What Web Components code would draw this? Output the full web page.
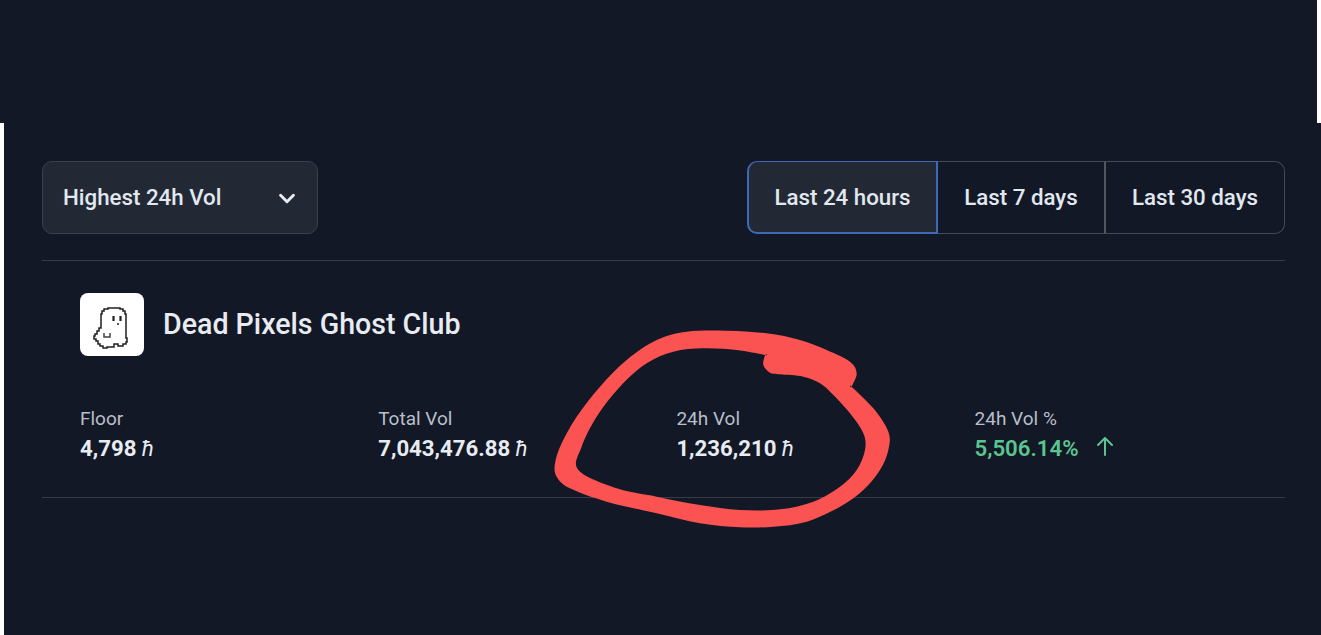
<!DOCTYPE html>
<html>
<head>
<meta charset="utf-8">
<style>
  html, body { margin: 0; padding: 0; height: 100%; background: #fff; overflow: hidden; }
  body { font-family: Roboto, "Liberation Sans", sans-serif; color: #e2e8f0; }
</style>
</head>
<body>
<template id="tpl-page">
  <style>
    :host { display: flex; flex-direction: column; width: 1321px; height: 635px; background: #fff; }
    .top { height: 123px; margin-right: 4px; background: #121826; flex: none; }
    .main { flex: 1; margin-left: 4px; background: #121826; padding: 38px 36px 0 38px; }
  </style>
  <div class="top"></div>
  <div class="main"><slot></slot></div>
</template>

<template id="tpl-select">
  <style>
    :host { display: flex; align-items: center; justify-content: space-between; box-sizing: border-box;
      width: 276px; height: 73px; padding: 0 19px 2px 20px; background: #222935; border: 1px solid #3a414e; border-radius: 10px;
      font-size: 22.3px; font-weight: 500; color: #e2e8f0; }
    svg { width: 22px; height: 22px; display: block; margin-top: 2px; }
  </style>
  <slot></slot>
  <svg viewBox="0 0 24 24" fill="none" stroke="#e8edf3" stroke-width="3.2" stroke-linecap="round" stroke-linejoin="round"><path d="M5 9l7 7 7-7"/></svg>
</template>

<template id="tpl-range">
  <style>
    :host { display: flex; box-sizing: border-box; height: 73px; }
  </style>
  <slot></slot>
</template>

<template id="tpl-range-btn">
  <style>
    :host { display: flex; align-items: center; justify-content: center; box-sizing: border-box; height: 73px; padding-bottom: 2px;
      border: 1px solid #434a57; border-left-width: 0; border-right: 2px solid #51575f; font-size: 22.3px; font-weight: 500; color: #e2e8f0; background: #121826; }
    :host([last]) { border-radius: 0 10px 10px 0; border-right: 1px solid #434a57; }
    :host([active]) { background: #222935; border: 2px solid #3f68b5; border-top-width: 1px; border-radius: 10px 0 0 10px; padding-bottom: 1px; }
  </style>
  <slot></slot>
</template>

<template id="tpl-collection">
  <style>
    :host { display: flex; align-items: center; gap: 19px; font-size: 28.6px; font-weight: 500; color: #e8ecf1; }
    .logo { width: 64px; height: 63px; background: #fff; border-radius: 8px; display: flex; align-items: center; justify-content: center; flex: none; }
    .name { margin-bottom: 1px; }
  </style>
  <div class="logo">
    <svg width="54" height="54" viewBox="0 0 54 54" fill="none" stroke="#1f1f1f" stroke-width="1.5">
      <path fill="#fff" d="M23 10H35V11H38V13H40V16H41V40H42V44H41V46H38V48H33V46H29V49H22V50H18V48H15V46H13V43H11V41H9V38H10V36H12V33H14V30H16V16H17V13H19V11H23Z"/>
      <path d="M19 35V39H25V35" stroke="#444"/>
      <path d="M28.5 18V23M35.5 18V23" stroke-width="2.2" stroke="#222"/>
      <path d="M32 26H34" stroke="#222"/>
    </svg>
  </div>
  <span class="name"><slot></slot></span>
</template>

<template id="tpl-stats">
  <style>
    :host { display: grid; grid-template-columns: repeat(4, 298.2px); box-sizing: border-box; }
  </style>
  <slot></slot>
</template>

<template id="tpl-stat">
  <style>
    :host { display: block; }
    .label { font-size: 19px; line-height: 24px; color: #b9bfc9; }
    .value { font-size: 22.2px; line-height: 34px; font-weight: 700; color: #e8ecf1; display: flex; align-items: center; }
    :host([up]) .value { color: #5cc48f; font-weight: 600; }
    svg { margin-left: 15px; margin-top: -4px; width: 22px; height: 22px; }
  </style>
  <div class="label"></div>
  <div class="value"><slot></slot><svg viewBox="0 0 22 22" fill="none" stroke="#5cc48f" stroke-width="2" stroke-linecap="round" stroke-linejoin="round"><path d="M11 20V3M4 10l7-7 7 7"/></svg></div>
</template>

<template id="tpl-scribble">
  <style>
    :host { position: absolute; left: 540px; top: 320px; width: 360px; height: 215px; pointer-events: none; display: block; }
    svg { display: block; }
  </style>
  <svg width="360" height="215" viewBox="0 0 1080 645"><path fill="#fb5252" fill-rule="evenodd"/></svg>
</template>

<app-page>
  <div style="display:flex;justify-content:space-between;align-items:flex-start">
    <sort-select>Highest 24h Vol</sort-select>
    <range-tabs>
      <range-button active style="width:191px">Last 24 hours</range-button>
      <range-button style="width:168px">Last 7 days</range-button>
      <range-button last style="width:179px">Last 30 days</range-button>
    </range-tabs>
  </div>
  <div style="height:1px;background:#353c49;margin-top:26px"></div>
  <div style="padding:32px 0 0 38px">
    <collection-title>Dead Pixels Ghost Club</collection-title>
    <stat-grid style="margin-top:51px">
      <stat-item label="Floor">4,798 <i style="font-weight:400;margin-left:5px">ħ</i></stat-item>
      <stat-item label="Total Vol">7,043,476.88 <i style="font-weight:400;margin-left:5px">ħ</i></stat-item>
      <stat-item label="24h Vol">1,236,210 <i style="font-weight:400;margin-left:5px">ħ</i></stat-item>
      <stat-item label="24h Vol %" up>5,506.14%</stat-item>
    </stat-grid>
  </div>
  <div style="height:1px;background:#353c49;margin-top:32px"></div>
</app-page>
<hand-scribble></hand-scribble>

<script>
  class TemplateElement extends HTMLElement {
    constructor(id) {
      super();
      this.attachShadow({mode: 'open'});
      this.shadowRoot.appendChild(document.getElementById(id).content.cloneNode(true));
    }
  }

  class StatItem extends TemplateElement {
    constructor() { super('tpl-stat'); }
    connectedCallback() {
      this.shadowRoot.querySelector('.label').textContent = this.getAttribute('label');
      // only the percentage column has the arrow
      this.shadowRoot.querySelector('svg').style.display = this.hasAttribute('up') ? 'block' : 'none';
    }
  }

  // closed catmull-rom curve through a list of points, repeat a point for a corner
  function smoothLoop(pts) {
    const n = pts.length;
    let d = 'M' + pts[0].join(' ');
    for (let i = 0; i < n; i++) {
      const [p0, p1, p2, p3] = [pts[(i + n - 1) % n], pts[i], pts[(i + 1) % n], pts[(i + 2) % n]];
      d += 'C' + (p1[0] + (p2[0] - p0[0]) / 6) + ' ' + (p1[1] + (p2[1] - p0[1]) / 6) + ' '
        + (p2[0] - (p3[0] - p1[0]) / 6) + ' ' + (p2[1] - (p3[1] - p1[1]) / 6) + ' ' + p2.join(' ');
    }
    return d + 'Z';
  }

  class HandScribble extends TemplateElement {
    constructor() {
      super('tpl-scribble');
      const outer = [[440,35],[560,32],[680,40],[780,60],[860,90],[930,125],[950,160],[935,200],[935,200],[1000,265],[1045,335],[1045,390],[1020,450],[970,510],[900,560],[800,605],[700,620],[600,622],[480,610],[350,580],[200,545],[90,505],[50,470],[45,430],[65,370],[110,290],[180,200],[260,120],[350,60]];
      const inner = [[115,450],[125,380],[170,290],[240,200],[320,130],[400,95],[490,85],[590,90],[675,105],[675,105],[670,135],[690,158],[720,163],[790,170],[840,190],[880,225],[930,280],[970,340],[975,390],[950,450],[900,500],[820,545],[720,568],[600,570],[480,555],[350,530],[230,505]];
      this.shadowRoot.querySelector('path').setAttribute('d', smoothLoop(outer) + smoothLoop(inner));
    }
  }

  customElements.define('app-page', class extends TemplateElement { constructor() { super('tpl-page'); } });
  customElements.define('sort-select', class extends TemplateElement { constructor() { super('tpl-select'); } });
  customElements.define('range-tabs', class extends TemplateElement { constructor() { super('tpl-range'); } });
  customElements.define('range-button', class extends TemplateElement { constructor() { super('tpl-range-btn'); } });
  customElements.define('collection-title', class extends TemplateElement { constructor() { super('tpl-collection'); } });
  customElements.define('stat-grid', class extends TemplateElement { constructor() { super('tpl-stats'); } });
  customElements.define('stat-item', StatItem);
  customElements.define('hand-scribble', HandScribble);
</script>
</body>
</html>
